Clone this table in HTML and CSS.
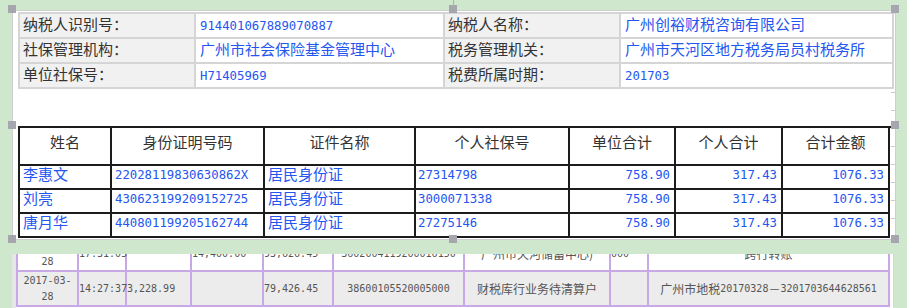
FILE: index.html
```html
<!DOCTYPE html>
<html lang="zh">
<head>
<meta charset="utf-8">
<title>社保明细</title>
<link rel="stylesheet" href="styles.css">
</head>
<body>
<div class="page">
  <div class="sheet">
    <div class="info">
      <div class="lab">纳税人识别号：</div>
      <div class="val"><span class="mono">914401067889070887</span></div>
      <div class="lab">纳税人名称：</div>
      <div class="val">广州创裕财税咨询有限公司</div>
      <div class="lab">社保管理机构：</div>
      <div class="val">广州市社会保险基金管理中心</div>
      <div class="lab">税务管理机关：</div>
      <div class="val">广州市天河区地方税务局员村税务所</div>
      <div class="lab">单位社保号：</div>
      <div class="val"><span class="mono">H71405969</span></div>
      <div class="lab">税费所属时期：</div>
      <div class="val"><span class="mono">201703</span></div>
    </div>
    <div class="data">
      <div class="th">姓名</div>
      <div class="th">身份证明号码</div>
      <div class="th">证件名称</div>
      <div class="th">个人社保号</div>
      <div class="th">单位合计</div>
      <div class="th">个人合计</div>
      <div class="th">合计金额</div>

      <div class="td">李惠文</div>
      <div class="td mono">22028119830630862X</div>
      <div class="td">居民身份证</div>
      <div class="td mono p2">27314798</div>
      <div class="td mono num">758.90</div>
      <div class="td mono num">317.43</div>
      <div class="td mono num">1076.33</div>

      <div class="td">刘亮</div>
      <div class="td mono">430623199209152725</div>
      <div class="td">居民身份证</div>
      <div class="td mono p2">3000071338</div>
      <div class="td mono num">758.90</div>
      <div class="td mono num">317.43</div>
      <div class="td mono num">1076.33</div>

      <div class="td">唐月华</div>
      <div class="td mono">440801199205162744</div>
      <div class="td">居民身份证</div>
      <div class="td mono p2">27275146</div>
      <div class="td mono num">758.90</div>
      <div class="td mono num">317.43</div>
      <div class="td mono num">1076.33</div>
    </div>

    <div class="ruler"></div>
    <div class="rot"></div>
    <div class="h h-tl"></div>
    <div class="h h-tm"></div>
    <div class="h h-tr"></div>
    <div class="h h-ml"></div>
    <div class="h h-mr"></div>
    <div class="h h-bl"></div>
    <div class="h h-bm"></div>
    <div class="h h-br"></div>
  </div>

  <div class="lower">
    <div class="ltable">
      <div class="lc c"><span class="m10">2017-03-<br>28</span></div>
      <div class="lc"><span class="m10">17:31:05</span></div>
      <div class="lc"></div>
      <div class="lc"><span class="m10">14,400.00</span></div>
      <div class="lc"><span class="m10">93,626.45</span></div>
      <div class="lc c"><span class="m10">3602004119200016150</span></div>
      <div class="lc c">广州市天河储蓄中心)</div>
      <div class="lc"><span class="m10">000</span></div>
      <div class="lc c">跨行转账</div>

      <div class="lc g c"><span class="m10">2017-03-<br>28</span></div>
      <div class="lc g"><span class="m10">14:27:37</span></div>
      <div class="lc g"><span class="m10">3,228.99</span></div>
      <div class="lc g"></div>
      <div class="lc g"><span class="m10">79,426.45</span></div>
      <div class="lc g c"><span class="m10">38600105520005000</span></div>
      <div class="lc g c">财税库行业务待清算户</div>
      <div class="lc g"></div>
      <div class="lc g c">广州市地税<span class="m10">20170328</span>－<span class="m10">3201703644628561</span></div>
    </div>
  </div>
</div>
</body>
</html>
```

FILE: styles.css
```css
html, body {
  margin: 0;
  padding: 0;
  background: #cfe7cc;
}

body {
  font-family: "Noto Sans CJK SC", "Noto Sans", sans-serif;
}

.page {
  width: 907px;
  height: 308px;
  overflow: hidden;
  padding: 10px 0 0 12px;
  box-sizing: border-box;
}

.mono {
  font-family: "DejaVu Sans Mono", "Noto Sans CJK SC", monospace;
  font-size: 12.3px;
}

/* ---------- upper selected picture ---------- */
.sheet {
  position: relative;
  width: 884px;
  height: 230px;
  box-sizing: border-box;
  border: 1px solid #cfcfcf;
  background: #fff;
  padding: 1px 0 1px 5px;
  display: flex;
  flex-direction: column;
  gap: 37px;
}

.info {
  display: grid;
  grid-template-columns: 176px 249px 176px 273px;
  width: 876px;
  border-top: 2px solid #d5d5d5;
  border-left: 2px solid #d5d5d5;
}

.info > div {
  height: 25px;
  box-sizing: border-box;
  border-right: 2px solid #d5d5d5;
  border-bottom: 2px solid #d5d5d5;
  font-size: 15px;
  line-height: 19px;
  white-space: nowrap;
}

.info .lab {
  background: #f1f1f1;
  color: #333;
  padding-left: 3px;
}

.info .val {
  color: #2456f0;
  padding-left: 4px;
}

.data {
  display: grid;
  grid-template-columns: 92px 153px 151px 154px 106px 107px 107px;
  width: 872px;
  border-top: 2px solid #1c1c1c;
  border-left: 2px solid #1c1c1c;
}

.data > div {
  box-sizing: border-box;
  border-right: 2px solid #1c1c1c;
  border-bottom: 2px solid #1c1c1c;
  white-space: nowrap;
}

.data .th {
  height: 38px;
  font-size: 15px;
  line-height: 28px;
  color: #333;
  text-align: center;
}

.data .td {
  height: 24px;
  font-size: 15px;
  line-height: 16px;
  color: #2456f0;
  padding-left: 3px;
}

.data .td.mono {
  font-size: 12.3px;
  padding-top: 1px;
}

.data .td.p2 {
  padding-left: 2px;
}

.data .td.num {
  text-align: right;
  padding-left: 0;
  padding-right: 4px;
}

/* ruler ticks at right edge */
.ruler {
  position: absolute;
  right: 0;
  top: 81px;
  width: 4px;
  height: 150px;
  background: repeating-linear-gradient(to bottom, #cccccc 0 1px, transparent 1px 18px);
}

/* selection handles */
.h {
  position: absolute;
  width: 8px;
  height: 8px;
  background: #a6a6ae;
}
.h-tl { left: -5px; top: -6px; }
.h-tm { left: 436px; top: -6px; }
.h-tr { left: 878px; top: -6px; }
.h-ml { left: -5px; top: 110px; }
.h-mr { left: 878px; top: 110px; }
.h-bl { left: -5px; top: 224px; }
.h-bm { left: 436px; top: 224px; }
.h-br { left: 878px; top: 224px; }

.rot {
  position: absolute;
  left: 440px;
  top: -11px;
  width: 1px;
  height: 5px;
  background: #f2a440;
}

/* ---------- lower page table ---------- */
.lower {
  margin-top: 14px;
  width: 882px;
  height: 54px;
  box-sizing: border-box;
  border-left: 4px solid #e6e6e6;
  border-right: 1px solid #d6d6d6;
  background: #fff;
  overflow: hidden;
}

.ltable {
  margin-top: -17px;
  display: grid;
  grid-template-columns: 61px 48px 65px 72px 70px 131px 146px 38px 241px;
  width: 874px;
  border-left: 2px solid #c9a8e8;
}

.lc {
  height: 35px;
  box-sizing: border-box;
  border-right: 2px solid #c9a8e8;
  border-bottom: 2px solid #c9a8e8;
  display: flex;
  align-items: center;
  justify-content: flex-start;
  white-space: nowrap;
  color: #555;
  font-size: 12px;
  line-height: 16px;
}

.lc.c {
  justify-content: center;
  text-align: center;
}

.lc.g {
  background: #ececec;
}

.m10 {
  font-family: "DejaVu Sans Mono", monospace;
  font-size: 10px;
  line-height: 16px;
}
```
